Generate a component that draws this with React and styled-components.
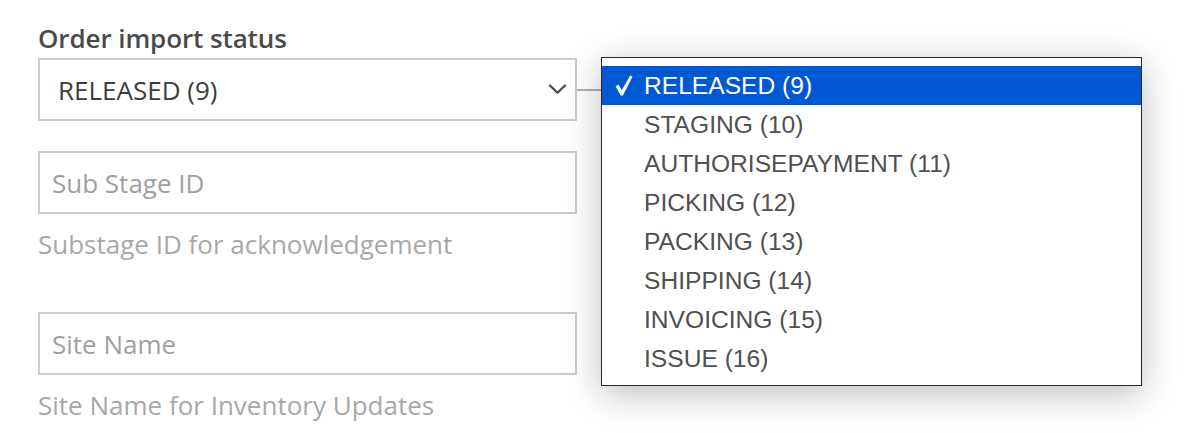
import React from "react";
import styled, { createGlobalStyle } from "styled-components";

const GlobalStyle = createGlobalStyle`
  html, body { margin: 0; padding: 0; background: #ffffff; }
  body { font-family: "Open Sans", "Liberation Sans", sans-serif; }
  * { box-sizing: border-box; }
`;

const Page = styled.div`
  width: 1196px;
  height: 433px;
  padding: 24px 0 0 38px;
  overflow: hidden;
`;

const Form = styled.div`
  width: 539px;
  display: flex;
  flex-direction: column;
`;

const Label = styled.div`
  font-family: "Open Sans", sans-serif;
  font-weight: 600;
  font-size: 26px;
  line-height: 28px;
  color: #4a4a4a;
  margin-bottom: 6px;
  letter-spacing: -0.1px;
`;

const Field = styled.div`
  display: flex;
  flex-direction: column;
  margin-top: ${(p) => p.$gap || 0}px;
`;

const SelectWrap = styled.div`
  position: relative;
`;

const SelectBox = styled.div`
  height: 63px;
  border: 2px solid #cccccc;
  background: #ffffff;
  display: flex;
  align-items: center;
  justify-content: space-between;
  padding: 0 8px 0 18px;
  font-family: "Open Sans", sans-serif;
  font-size: 26px;
  color: #3d3d3d;
`;

const Input = styled.input`
  height: 63px;
  width: 100%;
  border: 2px solid #cccccc;
  background: #ffffff;
  padding: 0 12px;
  font-family: "Open Sans", sans-serif;
  font-size: 26px;
  color: #3d3d3d;
  outline: none;
  &::placeholder { color: #a0a0a0; }
`;

const Help = styled.div`
  font-family: "Open Sans", sans-serif;
  font-size: 26px;
  line-height: 30px;
  color: #a8a8a8;
  margin-top: 15px;
`;

const Connector = styled.div`
  position: absolute;
  left: 100%;
  top: 31px;
  width: 24px;
  height: 2px;
  background: #b0b0b0;
`;

const Listbox = styled.ul`
  position: absolute;
  left: calc(100% + 24px);
  top: -1px;
  width: 541px;
  margin: 0;
  padding: 8px 0 7px;
  list-style: none;
  background: #ffffff;
  border: 1px solid #2a2a2a;
  box-shadow: 0 8px 34px rgba(0, 0, 0, 0.26);
  z-index: 10;
`;

const Option = styled.li`
  height: 39px;
  display: flex;
  align-items: center;
  padding-left: 13px;
  font-family: "Liberation Sans", Arial, sans-serif;
  font-size: 24.6px;
  color: ${(p) => (p.$selected ? "#ffffff" : "#505050")};
  background: ${(p) => (p.$selected ? "#0059d2" : "transparent")};
`;

const CheckSlot = styled.span`
  width: 29px;
  flex: none;
  display: flex;
  align-items: center;
  padding-bottom: 1px;
`;

const options = [
  "RELEASED (9)",
  "STAGING (10)",
  "AUTHORISEPAYMENT (11)",
  "PICKING (12)",
  "PACKING (13)",
  "SHIPPING (14)",
  "INVOICING (15)",
  "ISSUE (16)",
];

const CheckMark = () => (
  <svg width="18" height="21" viewBox="0 0 18 21">
    <path
      d="M0.6 11.2 L3.6 9.6 L6.7 15.3 L15.2 0.4 L17.6 1.6 L7.9 20.6 L5.6 20.6 Z"
      fill="#ffffff"
    />
  </svg>
);

const Chevron = () => (
  <svg width="19" height="11" viewBox="0 0 19 11">
    <polyline
      points="2,1.5 9.5,8.8 17,1.5"
      fill="none"
      stroke="#4a4a4a"
      strokeWidth="2.3"
      strokeLinecap="round"
      strokeLinejoin="round"
    />
  </svg>
);

export default function App() {
  const selected = 0;
  return (
    <>
      <GlobalStyle />
      <Page>
        <Form>
          <Field>
            <Label>Order import status</Label>
            <SelectWrap>
              <SelectBox>
                <span>{options[selected]}</span>
                <Chevron />
              </SelectBox>
              <Connector />
              <Listbox role="listbox">
                {options.map((o, i) => (
                  <Option key={o} $selected={i === selected} role="option">
                    <CheckSlot>{i === selected ? <CheckMark /> : null}</CheckSlot>
                    {o}
                  </Option>
                ))}
              </Listbox>
            </SelectWrap>
          </Field>
          <Field $gap={30}>
            <Input placeholder="Sub Stage ID" />
            <Help>Substage ID for acknowledgement</Help>
          </Field>
          <Field $gap={53}>
            <Input placeholder="Site Name" />
            <Help>Site Name for Inventory Updates</Help>
          </Field>
        </Form>
      </Page>
    </>
  );
}
